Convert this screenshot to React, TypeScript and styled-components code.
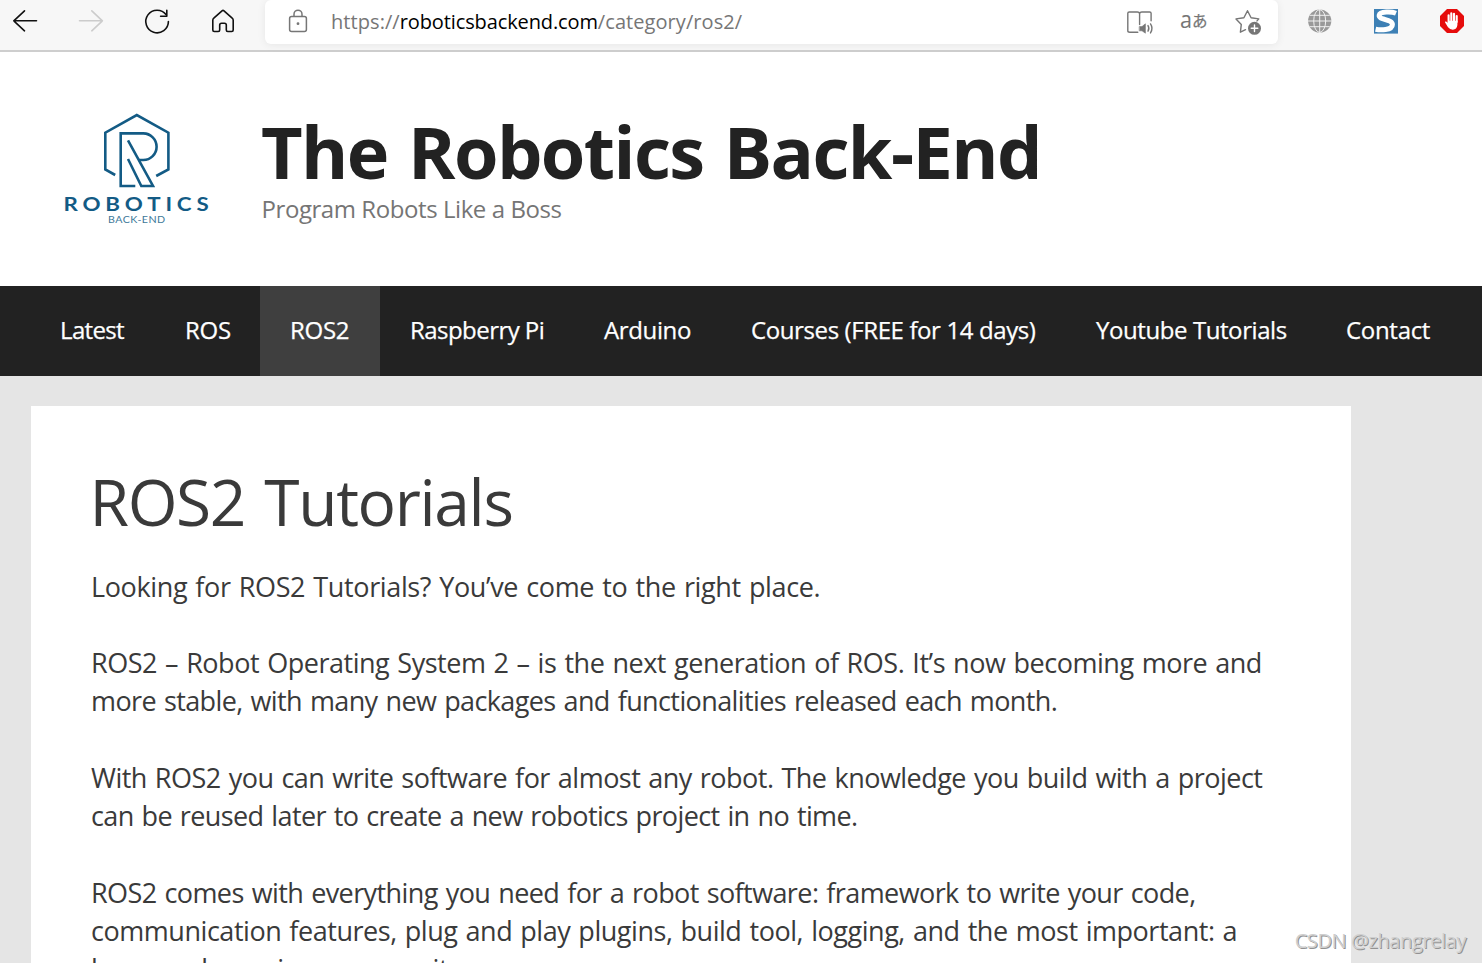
import React from 'react';
import styled, { createGlobalStyle, css } from 'styled-components';

const GlobalStyle = createGlobalStyle`
  *, *::before, *::after { box-sizing: border-box; }
  html, body { margin: 0; padding: 0; }
  body {
    height: 963px;
    overflow: hidden;
    background: #e5e5e5;
    font-family: "Open Sans", "Noto Sans", sans-serif;
    color: #3a3a3a;
  }
`;

const Page = styled.div`
  position: relative;
  width: 1482px;
  height: 963px;
  overflow: hidden;
  background: #e5e5e5;
`;

/* Browser toolbar */
const Toolbar = styled.div`
  display: flex;
  align-items: flex-start;
  height: 52px;
  padding-left: 10px;
  background: #f7f7f7;
  border-bottom: 2px solid #cecece;
`;

const ToolGroup = styled.div`
  display: flex;
  gap: 36px;
  padding-top: 6px;
`;

const Icon = styled.svg`
  display: block;
  flex: none;
  width: 30px;
  height: 30px;
  fill: none;
  stroke: currentColor;
  stroke-linecap: round;
  stroke-linejoin: round;
`;

const AddressBar = styled.div`
  display: flex;
  align-items: center;
  width: 1013px;
  height: 44px;
  margin: 0 27px;
  padding: 0 15px 2px 18px;
  border-radius: 6px;
  background: #fff;
  color: #767676;
  box-shadow: 0 1px 8px rgba(0, 0, 0, 0.07);
`;

const Url = styled.div`
  flex: 1;
  margin-left: 18px;
  padding-top: 2px;
  font-size: 20px;
  line-height: 30px;
  letter-spacing: 0.07px;
  white-space: nowrap;
  color: #767676;
`;

const Host = styled.span`
  letter-spacing: -0.12px;
  color: #000;
`;

const AddressActions = styled.div`
  display: flex;
  gap: 24px;
`;

/* Site header */
const Header = styled.header`
  display: flex;
  height: 234px;
  padding: 58px 0 0 60px;
  background: #fff;
`;

const Logo = styled.svg`
  display: block;
  flex: none;
  width: 155px;
  height: 120px;
  margin-right: 46px;
`;

const Branding = styled.div`
  padding-top: 1px;
`;

const SiteTitle = styled.div`
  font-size: 72px;
  font-weight: 700;
  line-height: 80px;
  letter-spacing: -1.58px;
  word-spacing: 3px;
  white-space: nowrap;
  color: #222;
`;

const Tagline = styled.div`
  padding-left: 0.5px;
  font-size: 24px;
  line-height: 36px;
  letter-spacing: -0.43px;
  white-space: nowrap;
  color: #757575;
`;

/* Main navigation */
const Nav = styled.nav`
  display: flex;
  height: 90px;
  padding-left: 30px;
  background: #222;
`;

const NavItem = styled.a<{ $width: number; $spacing: number; $active?: boolean }>`
  flex: none;
  width: ${(p) => p.$width}px;
  padding-left: 30px;
  font-size: 24px;
  line-height: 88px;
  letter-spacing: ${(p) => p.$spacing}px;
  white-space: nowrap;
  color: #fff;
  -webkit-text-stroke: 0.25px #fff;
  ${(p) => p.$active && css`background: #3f3f3f;`}
`;

/* Article */
const Article = styled.main`
  width: 1320px;
  height: 620px;
  margin: 30px 0 0 31px;
  padding: 61.5px 0 0 60px;
  background: #fff;
`;

const Heading = styled.h1`
  margin: 0 0 32px -1.5px;
  font-size: 64px;
  font-weight: 400;
  line-height: 68px;
  letter-spacing: -1.35px;
  word-spacing: 4px;
  white-space: nowrap;
`;

const Paragraph = styled.p`
  margin: 0 0 38.25px;
  font-size: 27px;
  line-height: 38.25px;
  word-spacing: 1.5px;
`;

const Line = styled.span<{ $spacing: number }>`
  display: block;
  letter-spacing: ${(p) => p.$spacing}px;
  white-space: nowrap;
`;

const Watermark = styled.div`
  position: absolute;
  right: 16px;
  bottom: 7px;
  font-size: 20px;
  line-height: 30px;
  letter-spacing: -0.4px;
  color: #cfcfcf;
  text-shadow: 1px 1px 0 #929292;
`;

const navItems = [
  { label: 'Latest', width: 125, spacing: -0.65 },
  { label: 'ROS', width: 105, spacing: -0.3 },
  { label: 'ROS2', width: 120, spacing: -0.3, active: true },
  { label: 'Raspberry Pi', width: 194, spacing: -0.55 },
  { label: 'Arduino', width: 147, spacing: -0.37 },
  { label: 'Courses (FREE for 14 days)', width: 345, spacing: -0.39 },
  { label: 'Youtube Tutorials', width: 250, spacing: -0.42 },
  { label: 'Contact', width: 144, spacing: -0.3 },
];

const paragraphs: [string, number][][] = [
  [['Looking for ROS2 Tutorials? You’ve come to the right place.', -0.37]],
  [
    ['ROS2 – Robot Operating System 2 – is the next generation of ROS. It’s now becoming more and', -0.47],
    ['more stable, with many new packages and functionalities released each month.', -0.61],
  ],
  [
    ['With ROS2 you can write software for almost any robot. The knowledge you build with a project', -0.52],
    ['can be reused later to create a new robotics project in no time.', -0.62],
  ],
  [
    ['ROS2 comes with everything you need for a robot software: framework to write your code,', -0.59],
    ['communication features, plug and play plugins, build tool, logging, and the most important: a', -0.46],
    ['huge and growing community.', -0.36],
  ],
];

const BackIcon = ({ color }: { color: string }) => (
  <Icon color={color} strokeWidth="1.6">
    <path d="M26.5 14.8H3.8M14.5 4.8L3.8 14.8L14.5 24.8" />
  </Icon>
);

const ForwardIcon = ({ color }: { color: string }) => (
  <Icon color={color} strokeWidth="1.6">
    <path d="M3.5 14.8H26.4M15.8 4.8L26.4 14.8L15.8 24.8" />
  </Icon>
);

const ReloadIcon = () => (
  <Icon color="#111" strokeWidth="1.6">
    <path d="M26.4 15.5A11.3 11.3 0 1 1 24.2 8.8" />
    <path d="M24.8 4.2V10.2H18.6" />
  </Icon>
);

const HomeIcon = () => (
  <Icon color="#111" strokeWidth="1.6">
    <path d="M4.8 14.2Q4.8 13 5.8 12.2L14 4.8Q15 4 16 4.8L24.2 12.2Q25.2 13 25.2 14.2V24Q25.2 25.5 23.7 25.5H19.8Q18.3 25.5 18.3 24V19Q18.3 17.2 16.5 17.2H13.5Q11.7 17.2 11.7 19V24Q11.7 25.5 10.2 25.5H6.3Q4.8 25.5 4.8 24Z" />
  </Icon>
);

const LockIcon = () => (
  <Icon strokeWidth="1.5">
    <rect x="6.6" y="10.5" width="16.8" height="15" rx="2" />
    <path d="M11 10.3V8.2A4 4 0 0 1 19 8.2V10.3" />
    <circle cx="15" cy="17.7" r="1.4" fill="currentColor" stroke="none" />
  </Icon>
);

const ReaderIcon = () => (
  <Icon strokeWidth="1.4">
    <path d="M12.8 26.3H4.8Q2.8 26.3 2.8 24.8V7.3Q2.8 6 4.2 6H12.3Q14.6 6 14.6 8V18.5M14.6 8Q14.6 6 16.9 6H24.6Q26.1 6 26.1 7.3V14.8" />
    <path d="M14.6 20.6H17L20.4 17.8V27.2L17 24.8H14.6Z" fill="currentColor" strokeWidth="0.6" />
    <path d="M23 19.6Q24.7 22.4 23 25.2M25.5 17.9Q28.5 22.4 25.5 26.9" />
  </Icon>
);

const TranslateIcon = () => (
  <Icon viewBox="0 0 30 30">
    <text x="1" y="21.5" fontFamily="Open Sans, sans-serif" fontSize="24" textLength="12" lengthAdjust="spacingAndGlyphs" fill="currentColor" stroke="none">a</text>
    <text x="13" y="20.6" fontFamily="Noto Sans CJK JP, sans-serif" fontSize="15.5" fill="currentColor" stroke="currentColor" strokeWidth="0.25">あ</text>
  </Icon>
);

const FavoriteIcon = () => (
  <Icon strokeWidth="1.4">
    <path d="M12.5 23.7L7.4 26.2L8.3 18.4L3 12.9L10.9 11.8L14.5 4.7L18.1 11.8L25.8 12.9L24 14.9" />
    <circle cx="21.5" cy="22.3" r="6.5" fill="currentColor" stroke="none" />
    <path d="M21.5 19V25.6M18.2 22.3H24.8" stroke="#fff" />
  </Icon>
);

const GlobeIcon = () => (
  <Icon viewBox="0 0 30 30">
    <circle cx="14.7" cy="15" r="11.6" fill="#999" stroke="none" />
    <g stroke="#f0f0f0" strokeWidth="1">
      <path d="M14.7 3.5V26.5M3 15H26.4M5 9.3H24.4M5 20.7H24.4" />
      <ellipse cx="14.7" cy="15" rx="6" ry="11.4" />
    </g>
  </Icon>
);

/* White ribbon folded over a blue tile */
const RibbonIcon = () => (
  <Icon viewBox="0 0 30 30">
    <rect x="3" y="3" width="24" height="24.6" fill="#3d80b5" stroke="none" />
    <path
      d="M25 7.2C21 5.6 9 5 8.2 9.2C7.4 14.6 21.6 12.6 21.4 18.6C21.2 24.6 9 24.2 4.6 23.2"
      stroke="#fff"
      strokeWidth="5"
      strokeLinecap="butt"
    />
  </Icon>
);

const BlockerIcon = () => (
  <Icon viewBox="0 0 30 30">
    <path d="M10 3H20L27 10V20L20 27H10L3 20V10Z" fill="#e60c0c" stroke="none" />
    <g stroke="#fff" strokeWidth="2.1">
      <path d="M11.6 16V9.3M14.3 15V7.3M17 15V7.8M19.7 16V10" />
      <path d="M11.6 15.5H19.7V19Q19.2 23 15.8 23Q13.2 23 11.6 20.8L8.7 16.2L11.6 18Z" fill="#fff" strokeWidth="1.4" />
    </g>
  </Icon>
);

const SiteLogo = () => (
  <Logo viewBox="60 110 155 120">
    <g fill="none" stroke="#135b85" strokeWidth="2.6">
      <path d="M115.2 175L105.3 169.4V132.7L136.8 115L168.4 132.7V169.4L156.2 176" />
      <path d="M135.3 186H120.7V133.4H143.3A13.3 13.3 0 0 1 143.3 160H138.5" />
      <path d="M128 140.3L153 186H141.3L128 159" />
    </g>
    <text
      x="63.5"
      y="210.6"
      textLength="150"
      lengthAdjust="spacingAndGlyphs"
      letterSpacing="4"
      fontFamily="Lato, sans-serif"
      fontWeight="700"
      fontSize="18.5"
      fill="#135b85"
    >
      ROBOTICS
    </text>
    <text
      x="108"
      y="222.6"
      textLength="57.5"
      lengthAdjust="spacingAndGlyphs"
      letterSpacing="0.4"
      fontFamily="Lato, sans-serif"
      fontSize="9.6"
      fill="#3d7899"
    >
      BACK-END
    </text>
  </Logo>
);

export default function App() {
  return (
    <Page>
      <GlobalStyle />
      <Toolbar>
        <ToolGroup>
          <BackIcon color="#111" />
          <ForwardIcon color="#ccc" />
          <ReloadIcon />
          <HomeIcon />
        </ToolGroup>
        <AddressBar>
          <LockIcon />
          <Url>
            https://<Host>roboticsbackend.com</Host>/category/ros2/
          </Url>
          <AddressActions>
            <ReaderIcon />
            <TranslateIcon />
            <FavoriteIcon />
          </AddressActions>
        </AddressBar>
        <ToolGroup>
          <GlobeIcon />
          <RibbonIcon />
          <BlockerIcon />
        </ToolGroup>
      </Toolbar>
      <Header>
        <SiteLogo />
        <Branding>
          <SiteTitle>The Robotics Back-End</SiteTitle>
          <Tagline>Program Robots Like a Boss</Tagline>
        </Branding>
      </Header>
      <Nav>
        {navItems.map((item) => (
          <NavItem key={item.label} $width={item.width} $spacing={item.spacing} $active={item.active}>
            {item.label}
          </NavItem>
        ))}
      </Nav>
      <Article>
        <Heading>ROS2 Tutorials</Heading>
        {paragraphs.map((lines) => (
          <Paragraph key={lines[0][0]}>
            {lines.map(([text, spacing]) => (
              <Line key={text} $spacing={spacing}>
                {text}
              </Line>
            ))}
          </Paragraph>
        ))}
      </Article>
      <Watermark>CSDN @zhangrelay</Watermark>
    </Page>
  );
}
